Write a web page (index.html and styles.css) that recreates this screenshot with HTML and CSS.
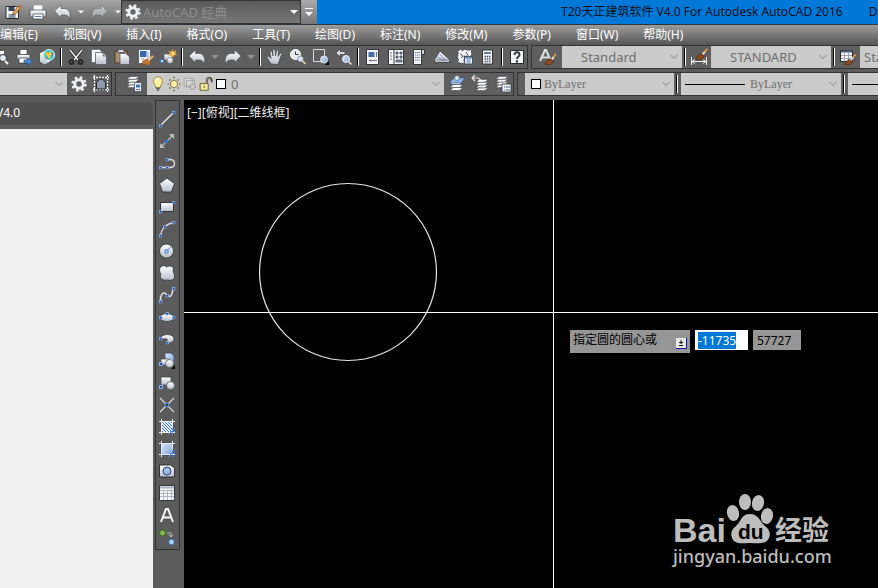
FILE: index.html
```html
<!DOCTYPE html>
<html lang="zh-CN">
<head>
<meta charset="utf-8">
<title>T20天正建筑软件 V4.0</title>
<link rel="stylesheet" href="styles.css">
</head>
<body>
<svg class="sprite" width="0" height="0" aria-hidden="true">
  <defs>
    <linearGradient id="pale" x1="0" y1="0" x2="0" y2="1"><stop offset="0" stop-color="#fff"/><stop offset="1" stop-color="#b9bfcb"/></linearGradient>
    <linearGradient id="sky" x1="0" y1="0" x2="1" y2="1"><stop offset="0" stop-color="#dbe8fa"/><stop offset="1" stop-color="#7fa3d8"/></linearGradient>
    <pattern id="stripes" width="3" height="3" patternUnits="userSpaceOnUse"><path d="M0 0L3 3" stroke="#3f78c8" stroke-width="1"/></pattern>
  </defs>
  <symbol id="gear" viewBox="0 0 20 20"><g fill="none" stroke="#eef0f4"><circle cx="10" cy="10" r="4.2" stroke-width="3"/><circle cx="10" cy="10" r="6.5" stroke-width="2.4" stroke-dasharray="2.6 2.5"/></g></symbol>
  <symbol id="print" viewBox="0 0 20 20"><path d="M6 3h9v6H6z" fill="#fff" stroke="#aaa"/><rect x="2.500" y="8" width="16" height="7" rx="1" fill="url(#pale)" stroke="#3c3f46" stroke-width=".7"/><path d="M5.500 12h10v5h-10z" fill="#fff" stroke="#3c3f46" stroke-width=".7"/><path d="M7 14.500h7" stroke="#5a7ca8"/></symbol>
  <symbol id="save" viewBox="0 0 20 20"><path d="M3.500 4.500h11l1.500 1.500v10.500H3.500z" fill="#f4f6fa" stroke="#26282d"/><path d="M6 5h6v4H6z" fill="#3d4656"/><path d="M6 12h7v4H6z" fill="#8796ad"/><path d="M10 13l1-3 5-6 2 2-5 6z" fill="#f3b34c" stroke="#55330f" stroke-width=".7"/><path d="M16 4l2 2 1-1.500-1.500-1.500z" fill="#e4572e"/></symbol>
  <symbol id="undo" viewBox="0 0 20 20"><path d="M2 9L8.500 3v3.500H12c4.500 0 6.500 4 5.500 11-1-3-2.500-4.500-5-4.500H8.500v3z" fill="url(#pale)" stroke="#484b50" stroke-width=".6"/></symbol>
  <symbol id="redo" viewBox="0 0 20 20"><path d="M18 9l-6.500-6v3.500H8C3.500 6.500 1.500 10.500 2.500 17.500c1-3 2.500-4.500 5-4.500h4v3z" fill="url(#pale)" stroke="#484b50" stroke-width=".6"/></symbol>
  <symbol id="tri" viewBox="0 0 8 6"><path d="M0 1h8L4 5z" fill="currentColor"/></symbol>
  <symbol id="chev" viewBox="0 0 10 8"><path d="M1.500 2L5 5.500 8.500 2" fill="none" stroke="#a2a2a2" stroke-width="1.200"/></symbol>
  <symbol id="preview" viewBox="0 0 20 20"><path d="M4 4h9v5H4z" fill="#fff"/><path d="M2 8h13l1 6H2z" fill="url(#pale)" stroke="#333" stroke-width=".7"/><circle cx="12" cy="11" r="3.500" fill="#e7edf5" stroke="#33373f"/><path d="M14 14l3 3" stroke="#f4f4f4" stroke-width="2"/></symbol>
  <symbol id="plot" viewBox="0 0 20 20"><path d="M6 2.500h7V8H6z" fill="#fff" stroke="#333" stroke-width=".6"/><rect x="3" y="7.500" width="13" height="5" rx="1" fill="url(#pale)" stroke="#333" stroke-width=".7"/><path d="M5 11h8v5H5z" fill="#fff" stroke="#333" stroke-width=".7"/><path d="M10 13h4v-2.500l4 4-4 4V16h-4z" fill="#4f89d8" stroke="#234a81" stroke-width=".6"/></symbol>
  <symbol id="globe" viewBox="0 0 20 20"><path d="M2.500 6l5-2.500 6 2v9.500l-6 3-5-3z" fill="url(#pale)" stroke="#31404f" stroke-width=".7"/><circle cx="12" cy="8" r="5.500" fill="#39bfd2" stroke="#e8f7fb"/><path d="M9 5l3 1 1-2 2 3-2 2 1 3-3-1-1-3-2 1z" fill="#f2cd38"/><path d="M14 5l2 2-1 2zM8 10l3 2H9z" fill="#e55f2f"/></symbol>
  <symbol id="cut" viewBox="0 0 20 20"><path d="M4 3l8 10M16 3L8 13" stroke="#242424" stroke-width="3"/><path d="M4 3l8 10M16 3L8 13" stroke="#eee" stroke-width="1.500"/><circle cx="5.500" cy="15" r="2" fill="none" stroke="#242424" stroke-width="1.800"/><circle cx="14.500" cy="15" r="2" fill="none" stroke="#242424" stroke-width="1.800"/></symbol>
  <symbol id="copy" viewBox="0 0 20 20"><path d="M2.500 2.500h8l2 2v11h-10z" fill="#f8f9fb" stroke="#666b74" stroke-width=".8"/><path d="M6.500 5.500H14l3.500 3.500v8.500h-11z" fill="url(#pale)" stroke="#555b65" stroke-width=".8"/><path d="M14 6v3h3" fill="none" stroke="#666b74"/></symbol>
  <symbol id="paste" viewBox="0 0 20 20"><path d="M3 4h12v12H3z" fill="#a88d6b" stroke="#47382a"/><path d="M6 2.500h6v3H6z" fill="#d5d8de" stroke="#444" stroke-width=".7"/><path d="M8 6.500h6L17.500 10v7.500H8z" fill="url(#pale)" stroke="#4e535d" stroke-width=".7"/></symbol>
  <symbol id="match" viewBox="0 0 20 20"><path d="M3.500 2.500h12v14h-12z" fill="#f8f9fb" stroke="#34445c" stroke-width=".7"/><path d="M5 4h6.500v6H5z" fill="#3568ae"/><path d="M13 5v7M6 12h3" stroke="#8696ad"/><path d="M18 9l-4 4" stroke="#f0b766" stroke-width="2"/><path d="M8 14l4-2 4 4-3 3-3-2-3 1z" fill="#c6752c" stroke="#653612" stroke-width=".5"/></symbol>
  <symbol id="blockedit" viewBox="0 0 20 20"><path d="M6 7h8v6H6z" fill="url(#pale)" stroke="#555" stroke-width=".7"/><circle cx="12" cy="13.500" r="3" fill="url(#pale)" stroke="#555" stroke-width=".5"/><path d="M2.500 12.500h3v3h-3z" fill="#cfe1ff" stroke="#3874c7"/><path d="M14.500 2l1 2.500L18 3l-.5 3L19 8l-3 .500-1 2.500-1.500-2.500-3 .5L12 6.500 10.500 4l3 .5z" fill="#f3a52e"/><circle cx="15" cy="6.500" r="1.500" fill="#fff2b4"/></symbol>
  <symbol id="pan" viewBox="0 0 20 20"><path d="M6 17L2.500 11c-1-2 1-2 2-1L6 11.500 5 5c0-1.500 1.500-1.500 2 0l1 4V3.500c0-1.500 1.800-1.500 2 0L10.500 9l1-5c.3-1.500 2-1.300 1.800.2L13 9.500l2-3c.8-1 2-.3 1.500.8L14.500 13 13 17.500z" fill="url(#pale)" stroke="#33363c" stroke-width=".6"/></symbol>
  <symbol id="zoomrt" viewBox="0 0 20 20"><circle cx="7.500" cy="7.500" r="5" fill="#e7eaf0" stroke="#fff"/><path d="M7.500 4.500v3h3" fill="none" stroke="#333"/><circle cx="12.500" cy="12" r="3" fill="#d7e3f5" stroke="#444" stroke-width=".5"/><path d="M14.500 14l3 3" stroke="#ecd9b2" stroke-width="1.600"/></symbol>
  <symbol id="zoomwin" viewBox="0 0 20 20"><path d="M2.500 2.500h11v12h-11z" fill="none" stroke="#d7d9dd"/><circle cx="13" cy="12.500" r="3.500" fill="url(#sky)" stroke="#eee" stroke-width=".8"/><path d="M18 14v4h-4z" fill="#000"/></symbol>
  <symbol id="zoomprev" viewBox="0 0 20 20"><path d="M2 6l4-4v2.500h5v3H6V10z" fill="#d7d9dd" stroke="#333" stroke-width=".6"/><circle cx="12" cy="12" r="3.500" fill="url(#sky)" stroke="#eee"/><path d="M14.500 14.500l3 3" stroke="#f1e3c0" stroke-width="1.600"/></symbol>
  <symbol id="props" viewBox="0 0 20 20"><path d="M3.500 2.500h12v15h-12z" fill="#f5f6f9" stroke="#34373c"/><path d="M5.500 5h6v5h-6z" fill="#446ca7"/><path d="M13.500 5v5M6 13.500h2M9 13.500h5M8 12v3" stroke="#65728a"/></symbol>
  <symbol id="dcenter" viewBox="0 0 20 20"><path d="M2.500 2.500h15v15h-15zM8 3v14" fill="#f5f6f9" stroke="#34373c"/><path d="M4 6h2M4 9h2M4 12h2M10 5h2v2h-2zM14 5h2v2h-2zM10 9h2v2h-2zM14 9h2v2h-2zM10 13h6v2h-6z" fill="#8093b5" stroke="#3f4a5c" stroke-width=".8"/></symbol>
  <symbol id="palettes" viewBox="0 0 20 20"><path d="M4.500 2.500h8v15h-8z" fill="#f5f6f9" stroke="#34373c"/><path d="M12.500 2.500h3v5h-3z" fill="#ced2da" stroke="#34373c"/><path d="M6 5.500h5M6 8h5M6 10.500h5M6 13h5" stroke="#68758d" stroke-dasharray="1.500 .5"/></symbol>
  <symbol id="sheet" viewBox="0 0 20 20"><path d="M2.500 12.500L8 4l9 8 1 3.500H3z" fill="url(#pale)" stroke="#34373c" stroke-width=".8"/><path d="M5.500 10l7 4M7.500 7l6 6M4 13h12" stroke="#68758d" stroke-width=".8"/></symbol>
  <symbol id="markup" viewBox="0 0 20 20"><path d="M2.500 4l3-1.500 2 1 3-1 3 1 3-1v6.500H9v7.500l-6.500-1 1-3-1-3 1-3z" fill="#f2f3f6" stroke="#34373c" stroke-width=".7" stroke-dasharray="3 1"/><path d="M5 7l3 2M6 11l2-2M11 5l2 3" stroke="#555"/><path d="M9.500 10h8v7h-8z" fill="#eef2f8" stroke="#415067"/><path d="M10 11h7M11.500 13h4M11.500 15h4" stroke="#4978b4"/></symbol>
  <symbol id="calc" viewBox="0 0 20 20"><path d="M4.500 3h10v14h-10z" fill="#f5f6f9" stroke="#34373c"/><path d="M6 5h7v2H6z" fill="#737e90"/><path d="M6.500 9.500h6M6.500 12h6M6.500 14.500h6" stroke="#444b57" stroke-width="1.300" stroke-dasharray="1.500 .75"/></symbol>
  <symbol id="help" viewBox="0 0 20 20"><path d="M3.500 3.500h13v13h-13z" fill="#f5f6f9" stroke="#25272b"/><path d="M7.500 8c0-4 5.500-3.500 5 0-.2 1.700-2.500 1.600-2.500 4" fill="none" stroke="#34373c" stroke-width="2"/><circle cx="10" cy="14.500" r="1.200" fill="#34373c"/></symbol>
  <symbol id="brush" viewBox="0 0 20 20"><path d="M19 1l-7 9" stroke="#e29a3c" stroke-width="2.800"/><path d="M15 6l-3 4" stroke="#ddd" stroke-width="2.800"/><path d="M1 17c3-1 3-8 8-8l5 3c0 5-6 8-13 5z" fill="#8b4b1f" stroke="#3e210e" stroke-width=".8"/></symbol>
  <symbol id="astyle" viewBox="0 0 20 20"><path d="M4 14L9 3h1l4 9M6 10.500h6" fill="none" stroke="#dedfe3" stroke-width="2"/><use href="#brush" x="8" y="6" width="13" height="13"/></symbol>
  <symbol id="dimstyle" viewBox="0 0 20 20"><use href="#brush" x="6" y="1" width="13" height="13"/><path d="M2.500 10v8M17.500 10v8M3 14.500h14M6 12.500l-3 2 3 2M14 12.500l3 2-3 2" fill="none" stroke="#eee"/></symbol>
  <symbol id="tablestyle" viewBox="0 0 20 20"><path d="M2.500 3.500h12v11h-12z" fill="#f6f7fa" stroke="#26282c"/><path d="M3 4.500h11" stroke="#51617d" stroke-width="2"/><path d="M3 8.500h11M3 11.500h11M6.500 5v9M10.500 5v9" stroke="#9aa2b0"/><use href="#brush" x="6" y="7" width="12" height="12"/></symbol>
  <symbol id="frame" viewBox="0 0 20 20"><path d="M3.500 1v17M16.500 1v17M2 3.500h16M2 15.500h16" stroke="#f1f1f1" stroke-width="1.300" stroke-dasharray="2 1"/><path d="M5.500 15V8.500L8.500 5h3l3 3.500V15z" fill="#8e98a8" stroke="#25282d"/></symbol>
  <symbol id="stack" viewBox="0 0 20 20"><g fill="#fbfcfe" stroke="#2f3338" stroke-width=".7"><path d="M1 18l5-4h13l-5 4z"/><path d="M1 14l5-4h13l-5 4z"/><path d="M1 10l5-4h13l-5 4z"/><path d="M1 6l5-4h13l-5 4z"/></g></symbol>
  <symbol id="layers" viewBox="0 0 20 20"><use href="#stack" x="2" y="1" width="14" height="14"/><path d="M10.500 8.500h7v9h-7z" fill="#eef3fa" stroke="#38424f" stroke-width=".7"/><path d="M12 10.500h4v3h-4z" fill="#3c72bb"/><path d="M12 15.500h4" stroke="#667"/></symbol>
  <symbol id="layercur" viewBox="0 0 20 20"><use href="#stack" x="2" y="3" width="15" height="15"/><path d="M2 9l5-5h11l-4 5z" fill="#8fb6ed" stroke="#315a95" stroke-width=".7"/><circle cx="10" cy="4" r="2.500" fill="#dce7f6" stroke="#38424f" stroke-width=".5"/></symbol>
  <symbol id="layerprev" viewBox="0 0 20 20"><use href="#stack" x="5" y="4" width="14" height="14"/><path d="M2 4h6l3 2M5 1L2 4l3 3" fill="none" stroke="#e6e6e6" stroke-width="1.200"/></symbol>
  <symbol id="layerstate" viewBox="0 0 20 20"><use href="#stack" x="2" y="1" width="14" height="14"/><path d="M9 10h9v8H9z" fill="#eef3fa" stroke="#333" stroke-width=".8"/><path d="M11 13h1M13 13h4M11 16h1M13 16h4" stroke="#48658d"/></symbol>
  <symbol id="bulb" viewBox="0 0 16 20"><path d="M5.500 14C5.500 11 3 10 3 7a5 5 0 0110 0c0 3-2.500 4-2.500 7z" fill="#fff2a0" stroke="#9a7b2f"/><path d="M6 5l2-1" stroke="#fff" stroke-width="2"/><path d="M6 15h4M7 17h2" stroke="#555" stroke-width="1.500"/></symbol>
  <symbol id="sun" viewBox="0 0 16 20"><circle cx="8" cy="10" r="4" fill="#fff0a2" stroke="#77705b"/><path d="M8 2v2M8 16v2M1 10h1M14 10h1M3 5l1 1M12 14l1 1M13 5l-1 1M4 14l-1 1" stroke="#655832" stroke-width="1.500"/></symbol>
  <symbol id="vpfreeze" viewBox="0 0 16 20"><path d="M1.500 3.500h9v9h-9zM4 6h9v7H4z" fill="#d9d9d9" stroke="#a2a2a2"/><circle cx="11" cy="13" r="3" fill="#ccc" stroke="#999" stroke-width="1.500" stroke-dasharray="1.500 1"/></symbol>
  <symbol id="lock" viewBox="0 0 16 20"><path d="M9 10V6c0-4 5-3 5 0v2" fill="none" stroke="#494534" stroke-width="2.500"/><path d="M9 10V6c0-3 4-3 4 0v2" fill="none" stroke="#eee" stroke-width=".7"/><path d="M1.500 9.500h9V17h-9z" fill="#f6e5a0" stroke="#695c2e"/><path d="M6 11.500v3" stroke="#7c6930"/></symbol>
  <symbol id="grip" viewBox="0 0 4 4"><path d="M.5.5h3v3h-3z" fill="#244b86" stroke="#8bb6ff"/></symbol>
  <symbol id="line" viewBox="0 0 20 20"><path d="M3 17L16 4" stroke="#f1f1f1" stroke-width="1.300"/><use href="#grip" x="2" y="15" width="3.500" height="3.500"/><use href="#grip" x="15" y="2" width="3.500" height="3.500"/></symbol>
  <symbol id="xline" viewBox="0 0 20 20"><path d="M4 16L16 4" stroke="#bbb" stroke-width="1.300"/><path d="M17 3v5l-5-5zM3 17v-5l5 5z" fill="#bbb"/><path d="M8 9h3v3H8z" fill="#2f74df"/></symbol>
  <symbol id="pline" viewBox="0 0 20 20"><path d="M4 14.500h9c6 0 6-8 0-8h-3" fill="none" stroke="#dedede" stroke-width="1.400"/><use href="#grip" x="2" y="13" width="3.500" height="3.500"/><use href="#grip" x="8.500" y="13" width="3.500" height="3.500"/><use href="#grip" x="8.500" y="5" width="3.500" height="3.500"/></symbol>
  <symbol id="polygon" viewBox="0 0 20 20"><path d="M10 3l7.500 5.500-3 8.500h-9l-3-8.500z" fill="url(#pale)" stroke="#3a3c41"/></symbol>
  <symbol id="rect" viewBox="0 0 20 20"><path d="M3.500 5.500h13v9h-13z" fill="url(#pale)" stroke="#333"/><use href="#grip" x="2" y="13" width="3.500" height="3.500"/><use href="#grip" x="15" y="4" width="3.500" height="3.500"/></symbol>
  <symbol id="arc" viewBox="0 0 20 20"><path d="M3.500 17C4 11 8 5 16 4" fill="none" stroke="#d8d8d8" stroke-width="1.400"/><use href="#grip" x="2" y="15" width="3.500" height="3.500"/><use href="#grip" x="6" y="6" width="3.500" height="3.500"/><use href="#grip" x="15" y="2" width="3.500" height="3.500"/></symbol>
  <symbol id="circle" viewBox="0 0 20 20"><circle cx="9.500" cy="10" r="7" fill="url(#pale)" stroke="#42454a"/><path d="M9.500 10L14 6" stroke="#518ce5"/><path d="M8 9h3v3H8z" fill="#dbe9ff" stroke="#3a7bdd"/></symbol>
  <symbol id="cloud" viewBox="0 0 20 20"><path d="M4 4c2-2 4-1.500 5.500 0 3-2 7-1 7 2 0 1-1 2 0 3.500 1.500 2 1.500 5 0 7-2 1-4 1-6 .5-3 .5-5 0-6.500-1.500-1-2-1-3 0-4.500-2-2-2-6 0-7z" fill="url(#pale)" stroke="#414449"/></symbol>
  <symbol id="spline" viewBox="0 0 20 20"><path d="M3.500 16C3 10 6 6 9 9s6 5 7-6" fill="none" stroke="#ddd" stroke-width="1.600"/><use href="#grip" x="2" y="15" width="3.500" height="3.500"/><use href="#grip" x="8.500" y="9" width="3.500" height="3.500"/><use href="#grip" x="15" y="2" width="3.500" height="3.500"/></symbol>
  <symbol id="ellipse" viewBox="0 0 20 20"><ellipse cx="10" cy="10.500" rx="7" ry="4" fill="url(#pale)" stroke="#4a4d52"/><use href="#grip" x="2" y="9" width="3.500" height="3.500"/><use href="#grip" x="15" y="9" width="3.500" height="3.500"/><use href="#grip" x="8.500" y="5" width="3.500" height="3.500"/></symbol>
  <symbol id="earc" viewBox="0 0 20 20"><path d="M3 10c1-6 14-6 14 0 0 3-4 4-7 4v-4z" fill="url(#pale)" stroke="#4a4d52"/><use href="#grip" x="2" y="8" width="3.500" height="3.500"/><use href="#grip" x="8.500" y="12" width="3.500" height="3.500"/></symbol>
  <symbol id="insert" viewBox="0 0 20 20"><path d="M8 2h6l3 3v8H8z" fill="url(#sky)" stroke="#41536d" stroke-width=".8"/><path d="M4 8h8v6H4z" fill="url(#pale)" stroke="#444" stroke-width=".7"/><circle cx="12.500" cy="12.500" r="4" fill="url(#pale)" stroke="#555" stroke-width=".7"/><use href="#grip" x="2" y="11" width="4" height="4"/><path d="M18 14v4h-4z" fill="#000"/></symbol>
  <symbol id="block" viewBox="0 0 20 20"><path d="M4 4h10v8H4z" fill="url(#pale)" stroke="#444" stroke-width=".7"/><circle cx="13.500" cy="12.500" r="4" fill="url(#pale)" stroke="#555" stroke-width=".8"/><use href="#grip" x="2" y="12" width="4" height="4"/></symbol>
  <symbol id="point" viewBox="0 0 20 20"><path d="M3 3l14 14M17 3L3 17" stroke="#d9d9d9" stroke-width="1.200"/><path d="M8.500 8.500h3v3h-3z" fill="#333" stroke="#4e90ed"/></symbol>
  <symbol id="hatch" viewBox="0 0 20 20"><path d="M4 4h12v12H4z" fill="#e6efff"/><path d="M4 4h12v12H4z" fill="url(#stripes)"/><path d="M4.500 2v16M15.500 2v16M2 4.500h16M2 15.500h16" stroke="#f1f1f1"/><path d="M11 18l7-7M13 14.500h5M15.500 11v7" stroke="#4d8dec"/></symbol>
  <symbol id="gradient" viewBox="0 0 20 20"><path d="M4 4h12v12H4z" fill="url(#sky)" stroke="#27446f"/><path d="M4.500 2v16M15.500 2v16M2 4.500h16M2 15.500h16" stroke="#f1f1f1"/><path d="M11 18l7-7M13 14.500h5M15.500 11v7" stroke="#4d8dec"/></symbol>
  <symbol id="region" viewBox="0 0 20 20"><path d="M2.500 4h11l4 3v9h-15z" fill="url(#pale)" stroke="#303236"/><circle cx="10" cy="10" r="4" fill="#9dbbe5" stroke="#294775"/></symbol>
  <symbol id="table" viewBox="0 0 20 20"><path d="M2.500 2.500h15v15h-15z" fill="#f4f5f8" stroke="#33363b"/><path d="M3 4.500h14" stroke="#aab3c3" stroke-width="2"/><path d="M3 7.500h14M3 10.500h14M3 13.500h14M6.500 7v10M10.500 7v10M14.500 7v10" stroke="#b0b5be"/></symbol>
  <symbol id="mtext" viewBox="0 0 20 20"><path d="M4 17L9 4h2l5 13M6 12.500h8" fill="none" stroke="#f5f5f5" stroke-width="2"/></symbol>
  <symbol id="addsel" viewBox="0 0 20 20"><circle cx="5.500" cy="6" r="3" fill="#81bd54" stroke="#2f6513"/><circle cx="14.500" cy="15" r="3" fill="#a9d3ff" stroke="#235a9f"/><path d="M10 6h4v4M12 8l2 2 2-2" fill="none" stroke="#bcbcbc"/></symbol>
</svg>

<header class="titlebar">
  <div class="quick">
    <button aria-label="另存为"><svg class="ic"><use href="#save"/></svg></button>
    <button aria-label="打印"><svg class="ic"><use href="#print"/></svg></button>
    <button aria-label="放弃"><svg class="ic"><use href="#undo"/></svg></button>
    <button class="drop" aria-label="放弃列表"><svg class="tri"><use href="#tri"/></svg></button>
    <button class="dim" aria-label="重做"><svg class="ic"><use href="#redo"/></svg></button>
    <button class="drop" aria-label="重做列表"><svg class="tri"><use href="#tri"/></svg></button>
  </div>
  <div class="workspace">
    <svg class="ic"><use href="#gear"/></svg>
    <select aria-label="工作空间"><option>AutoCAD 经典</option></select>
    <svg class="tri"><use href="#tri"/></svg>
  </div>
  <button class="customize" aria-label="自定义"><i></i><svg class="tri"><use href="#tri"/></svg></button>
  <h1><span>T20天正建筑软件 V4.0 For Autodesk AutoCAD 2016</span><span>D</span></h1>
</header>

<nav class="menubar">
  <button>编辑(E)</button><button>视图(V)</button><button>插入(I)</button><button>格式(O)</button><button>工具(T)</button><button>绘图(D)</button><button>标注(N)</button><button>修改(M)</button><button>参数(P)</button><button>窗口(W)</button><button>帮助(H)</button>
</nav>

<div class="bars">
  <div class="row">
    <div class="panel std">
      <button aria-label="打印预览"><svg class="ic"><use href="#preview"/></svg></button>
      <button aria-label="发布"><svg class="ic"><use href="#plot"/></svg></button>
      <button aria-label="三维打印"><svg class="ic"><use href="#globe"/></svg></button>
      <i class="sep"></i>
      <button aria-label="剪切"><svg class="ic"><use href="#cut"/></svg></button>
      <button aria-label="复制"><svg class="ic"><use href="#copy"/></svg></button>
      <button aria-label="粘贴"><svg class="ic"><use href="#paste"/></svg></button>
      <button aria-label="特性匹配"><svg class="ic"><use href="#match"/></svg></button>
      <button aria-label="块编辑器"><svg class="ic"><use href="#blockedit"/></svg></button>
      <i class="sep"></i>
      <button aria-label="放弃"><svg class="ic"><use href="#undo"/></svg></button>
      <button class="drop faint" aria-label="放弃列表"><svg class="tri"><use href="#tri"/></svg></button>
      <button aria-label="重做"><svg class="ic"><use href="#redo"/></svg></button>
      <button class="drop faint" aria-label="重做列表"><svg class="tri"><use href="#tri"/></svg></button>
      <i class="sep"></i>
      <button aria-label="平移"><svg class="ic"><use href="#pan"/></svg></button>
      <button aria-label="实时缩放"><svg class="ic"><use href="#zoomrt"/></svg></button>
      <button aria-label="窗口缩放"><svg class="ic"><use href="#zoomwin"/></svg></button>
      <button aria-label="缩放上一个"><svg class="ic"><use href="#zoomprev"/></svg></button>
      <i class="sep"></i>
      <button aria-label="特性"><svg class="ic"><use href="#props"/></svg></button>
      <button aria-label="设计中心"><svg class="ic"><use href="#dcenter"/></svg></button>
      <button aria-label="工具选项板"><svg class="ic"><use href="#palettes"/></svg></button>
      <button aria-label="图纸集"><svg class="ic"><use href="#sheet"/></svg></button>
      <button aria-label="标记集"><svg class="ic"><use href="#markup"/></svg></button>
      <button aria-label="计算器"><svg class="ic"><use href="#calc"/></svg></button>
      <i class="sep"></i>
      <button aria-label="帮助"><svg class="ic"><use href="#help"/></svg></button>
    </div>
    <div class="panel styles">
      <button class="wide" aria-label="文字样式"><svg class="ic"><use href="#astyle"/></svg></button>
      <div class="combo style"><select aria-label="文字样式列表"><option>Standard</option></select><svg class="chev"><use href="#chev"/></svg></div>
      <i class="sep"></i>
      <button aria-label="标注样式"><svg class="ic"><use href="#dimstyle"/></svg></button>
      <div class="combo style"><select aria-label="标注样式列表"><option>STANDARD</option></select><svg class="chev"><use href="#chev"/></svg></div>
      <i class="sep"></i>
      <button aria-label="表格样式"><svg class="ic"><use href="#tablestyle"/></svg></button>
      <div class="combo style cut"><select aria-label="表格样式列表"><option>Standard</option></select></div>
    </div>
  </div>
  <div class="row">
    <div class="panel ws">
      <div class="combo grow"><select aria-label="工作空间列表"><option></option></select><svg class="chev"><use href="#chev"/></svg></div>
      <button aria-label="工作空间设置"><svg class="ic"><use href="#gear"/></svg></button>
      <button aria-label="我的工作空间"><svg class="ic"><use href="#frame"/></svg></button>
    </div>
    <div class="panel lay">
      <button aria-label="图层特性"><svg class="ic"><use href="#layers"/></svg></button>
      <div class="combo layer">
        <div class="flags"><svg><use href="#bulb"/></svg><svg><use href="#sun"/></svg><svg><use href="#vpfreeze"/></svg><svg><use href="#lock"/></svg><i class="swatch"></i></div>
        <select aria-label="图层"><option>0</option></select><svg class="chev"><use href="#chev"/></svg>
      </div>
      <button aria-label="置为当前"><svg class="ic"><use href="#layercur"/></svg></button>
      <button aria-label="上一个图层"><svg class="ic"><use href="#layerprev"/></svg></button>
      <button aria-label="图层状态"><svg class="ic"><use href="#layerstate"/></svg></button>
    </div>
    <div class="panel prop">
      <div class="combo color"><div class="flags"><i class="swatch"></i></div><select aria-label="颜色"><option>ByLayer</option></select><svg class="chev"><use href="#chev"/></svg></div>
      <i class="sep"></i>
      <div class="combo ltype"><div class="flags"><i class="rule"></i></div><select aria-label="线型"><option>ByLayer</option></select><svg class="chev"><use href="#chev"/></svg></div>
      <i class="sep"></i>
      <div class="combo cut"><div class="flags"><i class="rule"></i></div><select aria-label="线宽"><option></option></select></div>
    </div>
  </div>
</div>

<main class="work">
  <aside class="palette"><h2>V4.0</h2><div class="body"></div></aside>
  <div class="gutter">
    <div class="draw" role="toolbar" aria-label="绘图">
      <button aria-label="直线"><svg class="ic"><use href="#line"/></svg></button>
      <button aria-label="构造线"><svg class="ic"><use href="#xline"/></svg></button>
      <button aria-label="多段线"><svg class="ic"><use href="#pline"/></svg></button>
      <button aria-label="多边形"><svg class="ic"><use href="#polygon"/></svg></button>
      <button aria-label="矩形"><svg class="ic"><use href="#rect"/></svg></button>
      <button aria-label="圆弧"><svg class="ic"><use href="#arc"/></svg></button>
      <button aria-label="圆"><svg class="ic"><use href="#circle"/></svg></button>
      <button aria-label="修订云线"><svg class="ic"><use href="#cloud"/></svg></button>
      <button aria-label="样条曲线"><svg class="ic"><use href="#spline"/></svg></button>
      <button aria-label="椭圆"><svg class="ic"><use href="#ellipse"/></svg></button>
      <button aria-label="椭圆弧"><svg class="ic"><use href="#earc"/></svg></button>
      <button aria-label="插入块"><svg class="ic"><use href="#insert"/></svg></button>
      <button aria-label="创建块"><svg class="ic"><use href="#block"/></svg></button>
      <button aria-label="点"><svg class="ic"><use href="#point"/></svg></button>
      <button aria-label="图案填充"><svg class="ic"><use href="#hatch"/></svg></button>
      <button aria-label="渐变色"><svg class="ic"><use href="#gradient"/></svg></button>
      <button aria-label="面域"><svg class="ic"><use href="#region"/></svg></button>
      <button aria-label="表格"><svg class="ic"><use href="#table"/></svg></button>
      <button aria-label="多行文字"><svg class="ic"><use href="#mtext"/></svg></button>
      <button aria-label="添加选定对象"><svg class="ic"><use href="#addsel"/></svg></button>
    </div>
  </div>
  <section class="canvas">
    <svg class="drawing">
      <circle cx="164" cy="172" r="88.500" fill="none" stroke="#e4e4e4" stroke-width="1.200"/>
      <path d="M369.500 0v2000M0 212.500h4000" stroke="#fff" fill="none"/>
    </svg>
    <p class="view">[−][俯视][二维线框]</p>
    <form class="prompt">
      <label for="px">指定圆的圆心或 <svg width="11" height="11" viewBox="0 0 11 11"><path d="M0 0h11v11H0z" fill="#1616b4"/><path d="M0 0h10v10H0z" fill="#e9e9e9"/><path d="M5 2v4M3 4.500h4M3 7.500h4" stroke="#111"/></svg></label>
      <input id="px" class="x" value="-11735">
      <input class="y" value="57727" aria-label="Y">
    </form>
    <svg class="mark" width="164" height="80" viewBox="0 0 164 80" fill="#bdbdbd">
      <text x="4" y="50" class="bai">Bai</text>
      <ellipse cx="64" cy="21" rx="6" ry="8" transform="rotate(-12 64 21)"/>
      <ellipse cx="76" cy="10" rx="6" ry="8"/>
      <ellipse cx="89" cy="11" rx="6" ry="8" transform="rotate(12 89 11)"/>
      <ellipse cx="98" cy="24" rx="6" ry="8" transform="rotate(12 98 24)"/>
      <path d="M81 22c-9 0-9 8-14 12-4 3-6 7-4 12 3 7 10 5 18 5s16 2 19-5c2-5 0-9-4-12-5-4-6-12-15-12z"/>
      <text x="69" y="47" class="du">du</text>
      <text x="106" y="48" class="exp">经验</text>
      <text x="4" y="71" class="url">jingyan.baidu.com</text>
    </svg>
  </section>
</main>
<script src="app.js"></script>
</body>
</html>
```
FILE: styles.css
```css
* { box-sizing: border-box; }

body {
  margin: 0;
  height: 100vh;
  display: flex;
  flex-direction: column;
  overflow: hidden;
  background: #5b5b5b;
  font: 12px/16px "Noto Sans", "Noto Sans CJK SC", sans-serif;
}

button, select, input {
  font: inherit;
  color: inherit;
  border: 0;
  margin: 0;
  padding: 0;
  background: none;
  border-radius: 0;
}

button { display: flex; align-items: center; justify-content: center; flex: none; }
select { appearance: none; outline: 0; opacity: 1; }
svg { display: block; flex: none; }
.sprite { position: absolute; }
.ic { width: 20px; height: 20px; }
.tri { width: 8px; height: 6px; }
.chev { width: 10px; height: 8px; }

.titlebar {
  display: flex;
  height: 25px;
  flex: none;
  background: #0078d7;
  border-bottom: 1px solid #2e3338;
}
.quick {
  display: flex;
  align-items: center;
  gap: 4px;
  width: 121px;
  padding-left: 2px;
  color: #f4f4f4;
  background: linear-gradient(#a4a4a4, #6c6c6c);
}
.quick .ic { width: 21px; }
.quick .drop { width: 8px; }
.quick .tri { width: 6px; }
.dim { opacity: .5; }
.workspace {
  display: flex;
  align-items: center;
  width: 180px;
  padding: 0 2px 0 1px;
  border: 1px solid #333;
  background: linear-gradient(#5a5a5a, #777);
  color: #fff;
}
.workspace select { flex: 1; min-width: 0; color: #8c8c8c; font-size: 13px; }
.customize {
  width: 16px;
  flex-direction: column;
  gap: 2px;
  color: #fff;
  background: linear-gradient(#aaa, #777);
}
.customize i { width: 8px; height: 1px; background: #fff; }
.titlebar h1 {
  display: flex;
  gap: 26px;
  flex: 1;
  min-width: 0;
  margin: 0;
  padding-left: 244px;
  overflow: hidden;
  white-space: nowrap;
  font-size: 12px;
  line-height: 24px;
  font-weight: 400;
  color: #00101c;
}

.menubar {
  display: flex;
  gap: 25px;
  height: 20px;
  flex: none;
  background: linear-gradient(#9c9c9c, #555);
  color: #fff;
}

.bars { flex: none; display: flex; flex-direction: column; gap: 3px; padding-bottom: 4px; }
.row { display: flex; gap: 3px; height: 24px; }
.panel {
  display: flex;
  align-items: center;
  gap: 3px;
  border: 1px solid #333;
  background: #5f5f5f;
  flex: none;
}
.std { width: 528px; border-left: 0; overflow: hidden; }
.std > :first-child { margin-left: -9px; }
.drop { width: 10px; }
.faint { color: #939393; }
.sep {
  flex: none;
  width: 2px;
  height: 18px;
  margin-right: 1px;
  border-left: 1px solid #000;
  border-right: 1px solid #fff;
}
.styles, .prop { flex: 1; min-width: 0; border-right: 0; overflow: hidden; }
.styles { gap: 2px; }
.wide { width: 28px; }

.combo {
  display: flex;
  align-items: center;
  align-self: stretch;
  flex: none;
  padding-right: 3px;
  background: #cbcbcb;
  color: #6f6f6f;
}
.combo select { flex: 1; min-width: 0; height: 100%; }
.flags { display: flex; align-items: center; }
.flags svg { width: 16px; height: 18px; }
.swatch { width: 10px; height: 10px; border: 1px solid #000; background: #fff; }
.style { width: 120px; padding-left: 19px; font-size: 13px; }
.combo.cut { flex: 1; min-width: 0; padding: 0 0 0 4px; overflow: hidden; }

.ws { width: 112px; border-left: 0; gap: 2px; }
.grow { flex: 1; min-width: 0; }
.lay { width: 399px; padding-left: 8px; }
.layer { flex: 1; min-width: 0; padding-left: 3px; }
.layer .swatch { margin-left: 2px; }
.layer select { padding-left: 5px; font-size: 13px; }
.prop { padding-left: 7px; gap: 2px; font-family: "Liberation Serif", serif; }
.color { width: 149px; padding-left: 6px; }
.color select { padding-left: 3px; }
.ltype { width: 160px; padding-left: 4px; }
.ltype select { padding-left: 5px; }
.rule { width: 60px; height: 1px; background: #000; }

.work { flex: 1; min-height: 0; display: flex; }
.palette { width: 153px; flex: none; display: flex; flex-direction: column; padding-top: 2px; }
.palette h2 {
  margin: 0;
  height: 27px;
  font-size: 12px;
  line-height: 22px;
  font-weight: 400;
  color: #fff;
  text-indent: -4px;
  background: #505050;
  border-bottom: 4px solid #5e5e5e;
  border-radius: 0 5px 0 0;
}
.palette .body { flex: 1; background: #f0f0f0; }
.gutter { width: 31px; flex: none; padding-left: 2px; }
.draw { width: 25px; border: 1px solid #333; padding: 7px 0 1px; }
.draw button { width: 22px; height: 22px; }

.canvas { flex: 1; min-width: 0; position: relative; overflow: hidden; background: #000; }
.drawing { width: 100%; height: 100%; }
.view { position: absolute; left: 3px; top: 5px; margin: 0; color: #f0f0f0; }
.prompt { position: absolute; left: 386px; top: 230px; display: flex; align-items: flex-start; gap: 5px; }
.prompt label {
  display: flex;
  justify-content: space-between;
  width: 120px;
  height: 23px;
  padding: 2px 3px;
  background: #969696;
  color: #000;
}
.prompt label svg { margin-top: 6px; }
.prompt input { height: 20px; padding: 0 4px; outline: 0; background: #969696; color: #000; }
.prompt .x { width: 53px; background: #fff; padding-left: 3px; }
.prompt .y { width: 48px; }
.prompt input::selection { background: #0078d7; color: #fff; }

.mark { position: absolute; right: 45px; bottom: 16px; }
.bai { font: bold 34px "Liberation Sans", sans-serif; }
.du { font: bold 21px "Liberation Sans", sans-serif; fill: #000; }
.exp { font: bold 27px "Noto Sans CJK SC", sans-serif; }
.url { font: 500 18px "Noto Sans", sans-serif; }
```
FILE: app.js
```js
const field = document.getElementById('px');
field.focus();
field.select();
```
